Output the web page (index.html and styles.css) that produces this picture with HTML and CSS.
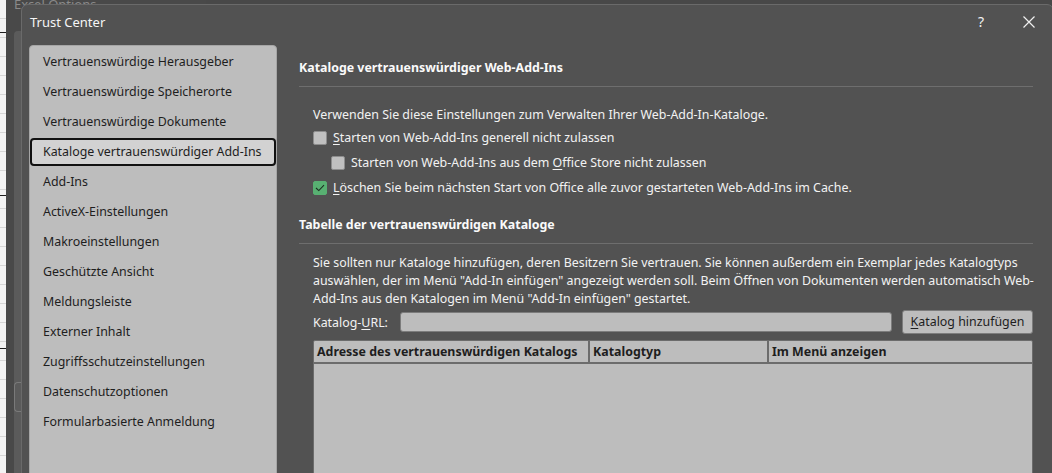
FILE: index.html
```html
<!DOCTYPE html>
<html lang="de">
<head>
    <meta charset="UTF-8">
    <title>Trust Center</title>
    <link rel="stylesheet" href="styles.css">
</head>
<body>
    <div class="sheet"></div>
    <div class="options-window">
        <div class="options-title">Excel Options</div>
        <div class="options-nav"><span class="options-btn"></span></div>
    </div>

    <div class="dialog">
        <div class="titlebar">
            <span class="title">Trust Center</span>
            <span class="title-btn help">?</span>
            <span class="title-btn close">
                <svg width="12" height="12" viewBox="0 0 12 12"><path d="M0.5 0.5 L11.5 11.5 M11.5 0.5 L0.5 11.5" stroke="#f0f0f0" stroke-width="1.2" fill="none"/></svg>
            </span>
        </div>
        <div class="dialog-body">
            <nav class="nav">
                <div class="nav-item">Vertrauenswürdige Herausgeber</div>
                <div class="nav-item">Vertrauenswürdige Speicherorte</div>
                <div class="nav-item">Vertrauenswürdige Dokumente</div>
                <div class="nav-item active">Kataloge vertrauenswürdiger Add-Ins</div>
                <div class="nav-item">Add-Ins</div>
                <div class="nav-item">ActiveX-Einstellungen</div>
                <div class="nav-item">Makroeinstellungen</div>
                <div class="nav-item">Geschützte Ansicht</div>
                <div class="nav-item">Meldungsleiste</div>
                <div class="nav-item">Externer Inhalt</div>
                <div class="nav-item">Zugriffsschutzeinstellungen</div>
                <div class="nav-item">Datenschutzoptionen</div>
                <div class="nav-item">Formularbasierte Anmeldung</div>
            </nav>

            <main class="content">
                <h2 class="section-title">Kataloge vertrauenswürdiger Web-Add-Ins</h2>
                <p class="intro">Verwenden Sie diese Einstellungen zum Verwalten Ihrer Web-Add-In-Kataloge.</p>
                <div class="check-row">
                    <span class="box"></span>
                    <span><u>S</u>tarten von Web-Add-Ins generell nicht zulassen</span>
                </div>
                <div class="check-row indent">
                    <span class="box"></span>
                    <span>Starten von Web-Add-Ins aus dem <u>O</u>ffice Store nicht zulassen</span>
                </div>
                <div class="check-row">
                    <span class="box checked">
                        <svg width="10" height="8" viewBox="0 0 10 8"><path d="M1 4 L3.8 6.6 L9 1.2" stroke="#1c2e21" stroke-width="1.1" fill="none"/></svg>
                    </span>
                    <span><u>L</u>öschen Sie beim nächsten Start von Office alle zuvor gestarteten Web-Add-Ins im Cache.</span>
                </div>

                <h2 class="section-title second">Tabelle der vertrauenswürdigen Kataloge</h2>
                <p class="notice">Sie sollten nur Kataloge hinzufügen, deren Besitzern Sie vertrauen. Sie können außerdem ein Exemplar jedes Katalogtyps<br>auswählen, der im Menü "Add-In einfügen" angezeigt werden soll. Beim Öffnen von Dokumenten werden automatisch Web-<br>Add-Ins aus den Katalogen im Menü "Add-In einfügen" gestartet.</p>
                <div class="url-row">
                    <span class="url-label">Katalog-<u>U</u>RL:</span>
                    <span class="url-input"></span>
                    <span class="add-button"><u>K</u>atalog hinzufügen</span>
                </div>
                <div class="catalog-table">
                    <div class="table-head">
                        <div class="col col-address">Adresse des vertrauenswürdigen Katalogs</div>
                        <div class="col col-type">Katalogtyp</div>
                        <div class="col col-menu">Im Menü anzeigen</div>
                    </div>
                    <div class="table-body"></div>
                </div>
            </main>
        </div>
    </div>
</body>
</html>
```

FILE: styles.css
```css
body {
    margin: 0;
    height: 100vh;
    overflow: hidden;
    background-color: #484848;
    font-family: "Noto Sans", "Open Sans", sans-serif;
    font-size: 12.4px;
    position: relative;
}
u {
    text-decoration: underline;
    text-underline-offset: 2px;
}

/* Excel im Hintergrund */
.sheet {
    position: absolute;
    left: 0;
    top: 0;
    width: 6px;
    height: 100%;
    background-color: #f3f3f3;
    background-image:
        linear-gradient(#1e1e1e, #1e1e1e),
        linear-gradient(#1e1e1e, #1e1e1e),
        linear-gradient(#1e1e1e, #1e1e1e),
        repeating-linear-gradient(to bottom, transparent 0, transparent 18px, #d6d6d6 18px, #d6d6d6 19px);
    background-size: 100% 1px, 100% 1px, 100% 1px, 100% 100%;
    background-position: 0 32px, 0 195px, 0 348px, 0 0;
    background-repeat: no-repeat;
}
.options-window {
    position: absolute;
    left: 6px;
    top: 0;
    width: 200px;
    height: 100%;
    background-color: #494949;
}
.options-title {
    color: #8a8a8a;
    font-size: 13px;
    line-height: 16px;
    padding-left: 8px;
    margin-top: -4px;
}
.options-nav {
    position: absolute;
    left: 8px;
    top: 31px;
    bottom: 0;
    width: 60px;
    background-color: #5b5b5b;
    border-radius: 4px 0 0 0;
}
.options-btn {
    position: absolute;
    left: 0;
    top: 351px;
    width: 8px;
    height: 28px;
    border: 1px solid #7a7a7a;
    border-right: none;
    border-radius: 4px 0 0 4px;
}

/* Trust Center Dialog */
.dialog {
    position: absolute;
    left: 21px;
    top: 4px;
    width: 1031px;
    height: 520px;
    background-color: #525252;
    border: 1px solid #6a6a6a;
    border-radius: 7px 7px 0 0;
    color: #f2f2f2;
}
.titlebar {
    height: 33px;
    display: flex;
    align-items: center;
}
.title {
    padding-left: 8px;
    flex: 1;
    color: #f5f5f5;
    font-size: 13px;
}
.title-btn {
    width: 48px;
    height: 33px;
    display: flex;
    align-items: center;
    justify-content: center;
    font-size: 14px;
}
.dialog-body {
    display: flex;
    padding: 7px 0 0 7px;
}

.nav {
    width: 246px;
    height: 440px;
    padding-top: 1px;
    background-color: #bdbdbd;
    border: 1px solid #a6a6a6;
    border-radius: 4px 4px 0 0;
    color: #1e1e1e;
}
.nav-item {
    height: 30px;
    line-height: 30px;
    padding-left: 13px;
    white-space: nowrap;
}
.nav-item.active {
    height: 24px;
    line-height: 24px;
    margin: 1px 0;
    padding-left: 11px;
    border: 2px solid #111;
    border-radius: 4px;
    background-color: #d2d2d2;
}

.content {
    margin-left: 22px;
    width: 734px;
}
.section-title {
    margin: 14px 0 0;
    padding-bottom: 9px;
    font-size: 12.4px;
    line-height: 18px;
    font-weight: bold;
    border-bottom: 1px solid #6e6e6e;
    color: #fafafa;
}
.section-title.second {
    margin-top: 16px;
}
.intro {
    margin: 19px 0 0;
    padding-left: 14px;
    line-height: 18px;
}
.check-row {
    height: 25px;
    display: flex;
    align-items: center;
    gap: 6px;
    padding-left: 14px;
    white-space: nowrap;
}
.check-row:first-of-type {
    margin-top: 1px;
}
.check-row.indent {
    padding-left: 32px;
}
.box {
    width: 12px;
    height: 12px;
    border: 1px solid #8d8d8d;
    border-radius: 2px;
    background-color: #c0c0c0;
    display: flex;
    align-items: center;
    justify-content: center;
}
.box.checked {
    background-color: #58b072;
    border-color: #58b072;
}
.notice {
    margin: 10px 0 0;
    padding-left: 14px;
    line-height: 18px;
    white-space: nowrap;
}
.url-row {
    margin-top: 2px;
    padding-left: 14px;
    display: flex;
    align-items: center;
    height: 24px;
}
.url-label {
    width: 87px;
}
.url-input {
    width: 490px;
    height: 18px;
    background-color: #bdbdbd;
    border: 1px solid #7c7c7c;
    border-radius: 3px;
}
.add-button {
    margin-left: 10px;
    width: 129px;
    height: 22px;
    line-height: 22px;
    text-align: center;
    background-color: #bdbdbd;
    border: 1px solid #7c7c7c;
    border-radius: 3px;
    color: #1e1e1e;
}
.catalog-table {
    margin: 6px 0 0 14px;
    height: 200px;
    background-color: #bdbdbd;
    border: 1px solid #6c6c6c;
    border-radius: 2px 2px 0 0;
    color: #1e1e1e;
}
.table-head {
    display: flex;
    height: 21px;
    border-bottom: 2px solid #6c6c6c;
}
.col {
    font-weight: bold;
    line-height: 21px;
    padding-left: 3px;
    white-space: nowrap;
    overflow: hidden;
}
.col-address {
    width: 271px;
    border-right: 2px solid #6c6c6c;
}
.col-type {
    width: 174px;
    border-right: 2px solid #6c6c6c;
}
.col-menu {
    flex: 1;
}
```
